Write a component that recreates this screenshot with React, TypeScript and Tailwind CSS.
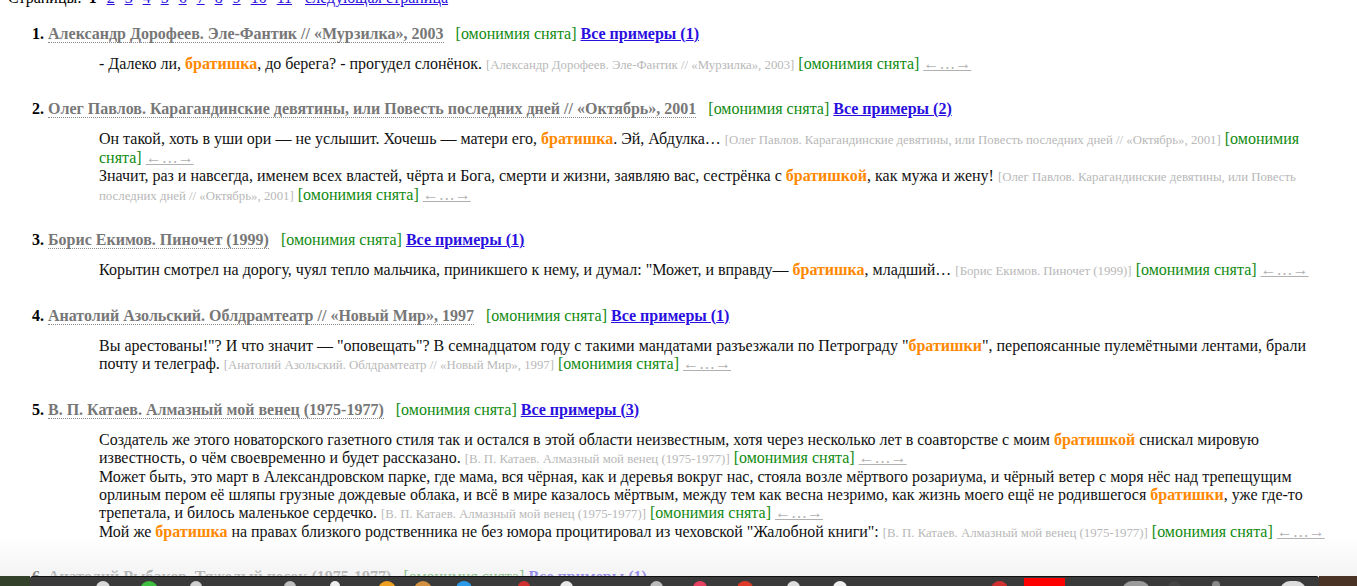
import React from "react";

type Ex = { text: string; source: string };
type It = { n: number; title: string; count: number; examples: Ex[] };

const items: It[] = [
  {
    n: 1,
    title: "Александр Дорофеев. Эле-Фантик // «Мурзилка», 2003",
    count: 1,
    examples: [
      {
        text: "- Далеко ли, *братишка*, до берега? - прогудел слонёнок.",
        source: "Александр Дорофеев. Эле-Фантик // «Мурзилка», 2003",
      },
    ],
  },
  {
    n: 2,
    title: "Олег Павлов. Карагандинские девятины, или Повесть последних дней // «Октябрь», 2001",
    count: 2,
    examples: [
      {
        text: "Он такой, хоть в уши ори — не услышит. Хочешь — матери его, *братишка*. Эй, Абдулка…",
        source: "Олег Павлов. Карагандинские девятины, или Повесть последних дней // «Октябрь», 2001",
      },
      {
        text: "Значит, раз и навсегда, именем всех властей, чёрта и Бога, смерти и жизни, заявляю вас, сестрёнка с *братишкой*, как мужа и жену!",
        source: "Олег Павлов. Карагандинские девятины, или Повесть последних дней // «Октябрь», 2001",
      },
    ],
  },
  {
    n: 3,
    title: "Борис Екимов. Пиночет (1999)",
    count: 1,
    examples: [
      {
        text: "Корытин смотрел на дорогу, чуял тепло мальчика, приникшего к нему, и думал: \"Может, и вправду— *братишка*, младший…",
        source: "Борис Екимов. Пиночет (1999)",
      },
    ],
  },
  {
    n: 4,
    title: "Анатолий Азольский. Облдрамтеатр // «Новый Мир», 1997",
    count: 1,
    examples: [
      {
        text: "Вы арестованы!\"? И что значит — \"оповещать\"? В семнадцатом году с такими мандатами разъезжали по Петрограду \"*братишки*\", перепоясанные пулемётными лентами, брали почту и телеграф.",
        source: "Анатолий Азольский. Облдрамтеатр // «Новый Мир», 1997",
      },
    ],
  },
  {
    n: 5,
    title: "В. П. Катаев. Алмазный мой венец (1975-1977)",
    count: 3,
    examples: [
      {
        text: "Создатель же этого новаторского газетного стиля так и остался в этой области неизвестным, хотя через несколько лет в соавторстве с моим *братишкой* снискал мировую известность, о чём своевременно и будет рассказано.",
        source: "В. П. Катаев. Алмазный мой венец (1975-1977)",
      },
      {
        text: "Может быть, это март в Александровском парке, где мама, вся чёрная, как и деревья вокруг нас, стояла возле мёртвого розариума, и чёрный ветер с моря нёс над трепещущим орлиным пером её шляпы грузные дождевые облака, и всё в мире казалось мёртвым, между тем как весна незримо, как жизнь моего ещё не родившегося *братишки*, уже где-то трепетала, и билось маленькое сердечко.",
        source: "В. П. Катаев. Алмазный мой венец (1975-1977)",
      },
      {
        text: "Мой же *братишка* на правах близкого родственника не без юмора процитировал из чеховской \"Жалобной книги\":",
        source: "В. П. Катаев. Алмазный мой венец (1975-1977)",
      },
    ],
  },
  {
    n: 6,
    title: "Анатолий Рыбаков. Тяжелый песок (1975-1977)",
    count: 1,
    examples: [
      {
        text: "И вот, когда он вернулся, его встретил *братишка*.",
        source: "Анатолий Рыбаков. Тяжелый песок (1975-1977)",
      },
    ],
  },
];

function Segs({ text }: { text: string }) {
  const parts = text.split("*");
  return (
    <>
      {parts.map((p, i) =>
        i % 2 === 1 ? (
          <span key={i} className="font-bold text-[#ff8800]">
            {p}
          </span>
        ) : (
          <React.Fragment key={i}>{p}</React.Fragment>
        )
      )}
    </>
  );
}

function Item({ it, first }: { it: It; first: boolean }) {
  return (
    <div className={first ? "mt-[17px]" : "mt-[27.2px]"}>
      <div className="pl-[32px]">
        <b className="text-black">{it.n}.</b>{" "}
        <span className="font-bold text-[#777777] border-b border-dotted border-[#8a8a8a]">{it.title}</span>
        <span className="ml-[12px] text-[#108a10]">[омонимия снята]</span>{" "}
        <a href="#" className="font-bold text-[#2a10e0] underline">
          Все примеры ({it.count})
        </a>
      </div>
      <div className="mt-[11.6px] pl-[99px] pr-[20px] text-[#111]">
        {it.examples.map((ex, i) => (
          <div key={i}>
            <Segs text={ex.text} />{" "}
            <span className="text-[12.8px] leading-none text-[#b8b8b8]">[{ex.source}]</span>{" "}
            <span className="text-[#108a10]">[омонимия снята]</span>{" "}
            <a href="#" className="text-[#b0b0b0] underline decoration-[#b0b0b0]">
              ←…→
            </a>
          </div>
        ))}
      </div>
    </div>
  );
}

const pages = [2, 3, 4, 5, 6, 7, 8, 9, 10, 11];

const dockIcons: { x: number; w: number; c: string }[] = [
  { x: 96, w: 14, c: "#d8d8d8" },
  { x: 140, w: 18, c: "#3fbf3f" },
  { x: 190, w: 12, c: "#cfcfcf" },
  { x: 284, w: 12, c: "#bdbdbd" },
  { x: 330, w: 10, c: "#eeeeee" },
  { x: 378, w: 18, c: "#f0a020" },
  { x: 414, w: 18, c: "#d09040" },
  { x: 456, w: 16, c: "#2a9ae8" },
  { x: 518, w: 12, c: "#d03030" },
  { x: 560, w: 13, c: "#e8e8e8" },
  { x: 650, w: 13, c: "#bbbbbb" },
  { x: 693, w: 14, c: "#e84060" },
  { x: 737, w: 16, c: "#e03a2a" },
  { x: 787, w: 13, c: "#dddddd" },
  { x: 833, w: 14, c: "#f0f0f0" },
  { x: 991, w: 17, c: "#d03030" },
  { x: 1122, w: 28, c: "#9a9a9a" },
  { x: 1168, w: 13, c: "#444" },
  { x: 1212, w: 8, c: "#888" },
  { x: 1280, w: 26, c: "#dddddd" },
];

export default function App() {
  return (
    <div className="relative h-[586px] w-[1357px] overflow-hidden bg-white font-['Liberation_Serif',serif] text-[16px] leading-[18.4px] text-black">
      <div className="-mt-[10.6px]">
        <div className="pl-[8px]">
          Страницы:<b className="ml-[7px]">1</b>
          {pages.map((p) => (
            <a key={p} href="#" className="ml-[10px] text-[#2a10e0] underline">
              {p}
            </a>
          ))}
          <a href="#" className="ml-[13px] text-[#2a10e0] underline">
            следующая страница
          </a>
        </div>
        <div>
          {items.map((it, i) => (
            <Item key={it.n} it={it} first={i === 0} />
          ))}
        </div>
      </div>

      <div className="pointer-events-none absolute bottom-[10px] left-0 h-[40px] w-full bg-gradient-to-b from-[rgba(255,255,255,0)] to-[rgba(236,236,236,0.6)]" />

      <div className="absolute bottom-0 left-0 flex h-[10px] w-full">
        <div className="w-[30px] bg-[#33402a]" />
        <div className="relative flex-1 rounded-tl-[3px] rounded-tr-[3px] border-t border-[#111] bg-[#3a3a3a]">
          {dockIcons.map((d, i) => (
            <div
              key={i}
              className="absolute top-[4px] h-[10px] rounded-t-full"
              style={{ left: d.x - 30, width: d.w, background: d.c }}
            />
          ))}
          <div className="absolute left-[994px] top-[1px] h-[9px] w-[41px] bg-[#ff0000]" />
        </div>
        <div className="w-[38px] bg-[#4a3324]" />
      </div>
    </div>
  );
}
